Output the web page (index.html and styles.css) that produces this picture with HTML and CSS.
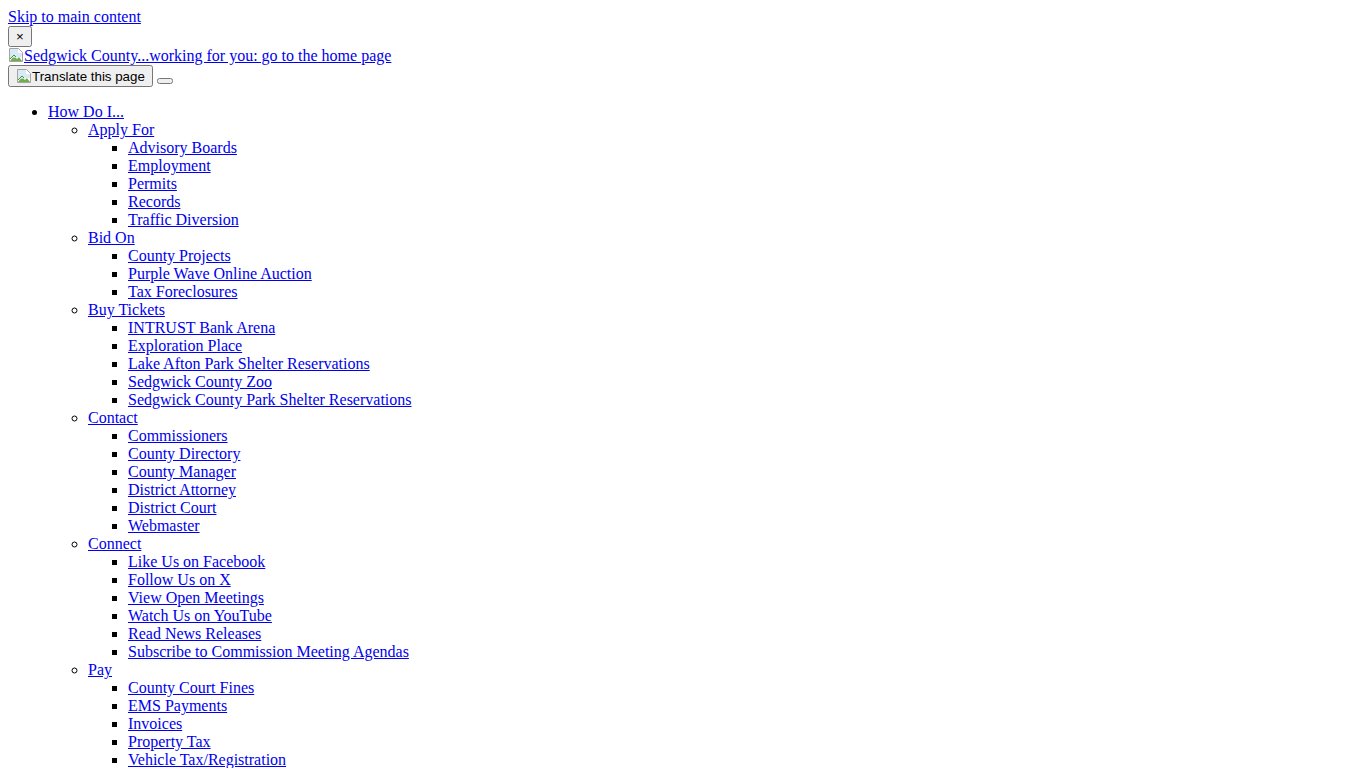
FILE: index.html
```html
<!DOCTYPE html>
<html lang="en">
<head>
    <meta charset="UTF-8">
    <meta name="viewport" content="width=device-width, initial-scale=1.0">
    <title>Sedgwick County, Kansas</title>
    <link rel="stylesheet" href="styles.css">
</head>
<body>
    <a href="#main" class="skip-link">Skip to main content</a>
    <div class="alert-bar">
        <button class="alert-close" type="button">&times;</button>
    </div>

    <header class="site-header">
        <div class="logo">
            <a href="/"><svg class="broken-img" width="16" height="16" viewBox="0 0 16 16"><path d="M1.5 1.5h9l4 4v9h-13z" fill="#fff" stroke="#a3a3a3"/><path d="M2 14l4-5 3 3 2-2 3 4z" fill="#6fae4b"/><path d="M2 2h8v4h4v4l-12 1z" fill="#d9e9f7"/><path d="M2 12l4-4 2 2" fill="none" stroke="#4f8f2f"/></svg>Sedgwick County...working for you: go to the home page</a>
        </div>
        <div class="translate">
            <button class="translate-btn" type="button"><svg class="broken-img" width="16" height="16" viewBox="0 0 16 16"><path d="M1.5 1.5h9l4 4v9h-13z" fill="#fff" stroke="#a3a3a3"/><path d="M2 14l4-5 3 3 2-2 3 4z" fill="#6fae4b"/><path d="M2 2h8v4h4v4l-12 1z" fill="#d9e9f7"/><path d="M2 12l4-4 2 2" fill="none" stroke="#4f8f2f"/></svg>Translate this page</button>
            <button class="menu-toggle" type="button"></button>
        </div>
    </header>

    <nav class="main-nav">
        <ul>
            <li><a href="#">How Do I...</a>
                <ul>
                    <li><a href="#">Apply For</a>
                        <ul>
                            <li><a href="#">Advisory Boards</a></li>
                            <li><a href="#">Employment</a></li>
                            <li><a href="#">Permits</a></li>
                            <li><a href="#">Records</a></li>
                            <li><a href="#">Traffic Diversion</a></li>
                        </ul>
                    </li>
                    <li><a href="#">Bid On</a>
                        <ul>
                            <li><a href="#">County Projects</a></li>
                            <li><a href="#">Purple Wave Online Auction</a></li>
                            <li><a href="#">Tax Foreclosures</a></li>
                        </ul>
                    </li>
                    <li><a href="#">Buy Tickets</a>
                        <ul>
                            <li><a href="#">INTRUST Bank Arena</a></li>
                            <li><a href="#">Exploration Place</a></li>
                            <li><a href="#">Lake Afton Park Shelter Reservations</a></li>
                            <li><a href="#">Sedgwick County Zoo</a></li>
                            <li><a href="#">Sedgwick County Park Shelter Reservations</a></li>
                        </ul>
                    </li>
                    <li><a href="#">Contact</a>
                        <ul>
                            <li><a href="#">Commissioners</a></li>
                            <li><a href="#">County Directory</a></li>
                            <li><a href="#">County Manager</a></li>
                            <li><a href="#">District Attorney</a></li>
                            <li><a href="#">District Court</a></li>
                            <li><a href="#">Webmaster</a></li>
                        </ul>
                    </li>
                    <li><a href="#">Connect</a>
                        <ul>
                            <li><a href="#">Like Us on Facebook</a></li>
                            <li><a href="#">Follow Us on X</a></li>
                            <li><a href="#">View Open Meetings</a></li>
                            <li><a href="#">Watch Us on YouTube</a></li>
                            <li><a href="#">Read News Releases</a></li>
                            <li><a href="#">Subscribe to Commission Meeting Agendas</a></li>
                        </ul>
                    </li>
                    <li><a href="#">Pay</a>
                        <ul>
                            <li><a href="#">County Court Fines</a></li>
                            <li><a href="#">EMS Payments</a></li>
                            <li><a href="#">Invoices</a></li>
                            <li><a href="#">Property Tax</a></li>
                            <li><a href="#">Vehicle Tax/Registration</a></li>
                        </ul>
                    </li>
                    <li><a href="#">Register</a>
                        <ul>
                            <li><a href="#">To Vote</a></li>
                            <li><a href="#">Your Pet</a></li>
                        </ul>
                    </li>
                </ul>
            </li>
        </ul>
    </nav>

    <main id="main"></main>
</body>
</html>
```

FILE: styles.css
```css
/* Page is shown with plain browser defaults; only fonts are pinned */
body {
    font-family: 'Liberation Serif', 'Times New Roman', serif;
    font-size: 16px;
}

button {
    font-family: 'Liberation Sans', Arial, sans-serif;
    font-size: 13.3333px;
}

.broken-img {
    vertical-align: -2px;
}

.translate-btn .broken-img {
    vertical-align: -3px;
}
```
